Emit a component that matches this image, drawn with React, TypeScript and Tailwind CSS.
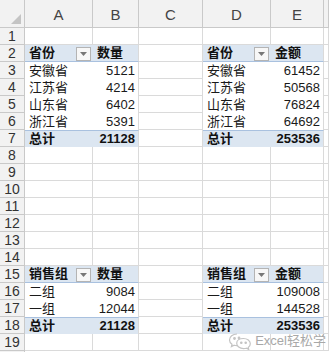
const font = "font-['Liberation_Sans','Noto_Sans_CJK_SC',sans-serif]";

const cols = [
  { k: "A", w: "w-[68px]" },
  { k: "B", w: "w-[46px]" },
  { k: "C", w: "w-[64px]" },
  { k: "D", w: "w-[68px]" },
  { k: "E", w: "w-[53px]" },
  { k: "", w: "flex-1" },
];

type Pivot = {
  col: number;
  row: number;
  head: [string, string];
  body: [string, number][];
  total: number;
};

const pivots: Pivot[] = [
  {
    col: 0,
    row: 2,
    head: ["省份", "数量"],
    body: [
      ["安徽省", 5121],
      ["江苏省", 4214],
      ["山东省", 6402],
      ["浙江省", 5391],
    ],
    total: 21128,
  },
  {
    col: 3,
    row: 2,
    head: ["省份", "金额"],
    body: [
      ["安徽省", 61452],
      ["江苏省", 50568],
      ["山东省", 76824],
      ["浙江省", 64692],
    ],
    total: 253536,
  },
  {
    col: 0,
    row: 15,
    head: ["销售组", "数量"],
    body: [
      ["二组", 9084],
      ["一组", 12044],
    ],
    total: 21128,
  },
  {
    col: 3,
    row: 15,
    head: ["销售组", "金额"],
    body: [
      ["二组", 109008],
      ["一组", 144528],
    ],
    total: 253536,
  },
];

const rows = Array.from({ length: 19 }, (_, i) => i + 1);

function DropButton() {
  return (
    <span className="absolute right-[2px] top-[2px] flex h-[14px] w-[15px] items-center justify-center border border-[#b4b4b4] bg-[#f7f7f7]">
      <svg width="7" height="4" viewBox="0 0 7 4">
        <path d="M0 0h7L3.5 4z" fill="#777" />
      </svg>
    </span>
  );
}

function Cell({ r, c }: { r: number; c: number }) {
  const w = cols[c].w;
  const p = pivots.find(
    (p) => (c === p.col || c === p.col + 1) && r >= p.row && r <= p.row + p.body.length + 1
  );
  if (!p) {
    return <div className={`${w} h-full border-r border-b border-[#dadada]`} />;
  }
  const first = c === p.col;
  const edge = first ? "" : "border-r border-[#dadada]";
  const align = first ? "justify-start pl-[4px]" : "justify-end pr-[3px]";
  if (r === p.row) {
    return (
      <div
        className={`${w} ${edge} relative flex h-full items-center justify-start pl-[4px] border-b border-b-[#a9c1df] bg-[#dce6f1] font-bold text-[#111]`}
      >
        {first ? p.head[0] : p.head[1]}
        {first && <DropButton />}
      </div>
    );
  }
  const last = p.row + p.body.length + 1;
  if (r === last) {
    return (
      <div
        className={`${w} ${edge} flex h-full items-center ${align} border-t border-t-[#a9c1df] bg-[#dce6f1] font-bold text-[#111]`}
      >
        {first ? "总计" : p.total}
      </div>
    );
  }
  const item = p.body[r - p.row - 1];
  return (
    <div className={`${w} ${edge} flex h-full items-center ${align} bg-white text-[#1a1a1a]`}>
      {first ? item[0] : item[1]}
    </div>
  );
}

function Watermark() {
  return (
    <div className="absolute right-[3px] top-[331px] flex items-center gap-[3px] text-[13px] text-[#a8a8a8]">
      <svg width="24" height="18" viewBox="0 0 24 18" fill="none" stroke="#c4c4c4" strokeWidth="1.2">
        <path d="M9 2C4.6 2 1.5 4.8 1.5 8c0 1.8 1 3.3 2.5 4.3L3.4 14.6l2.8-1.4c.9.3 1.8.4 2.8.4" />
        <path d="M15.5 6.5c3.8 0 6.8 2.4 6.8 5.3 0 1.5-.8 2.8-2.1 3.7l.5 1.9-2.3-1.2c-.9.3-1.9.4-2.9.4-3.8 0-6.8-2.4-6.8-5.3s3-4.8 6.8-4.8z" />
        <circle cx="6.5" cy="6.5" r="0.8" fill="#c4c4c4" />
        <circle cx="11" cy="6" r="0.8" fill="#c4c4c4" />
        <circle cx="13.3" cy="10.8" r="0.7" fill="#c4c4c4" />
        <circle cx="17.7" cy="10.8" r="0.7" fill="#c4c4c4" />
      </svg>
      <span>Excel轻松学</span>
    </div>
  );
}

export default function App() {
  return (
    <div className={`relative h-[352px] w-[329px] overflow-hidden bg-white text-[13px] ${font}`}>
      <div className="flex h-[28px] bg-[#f2f2f2] text-[15px] text-[#444]">
        <div className="relative h-full w-[25px] border-r border-b border-[#c9c9c9]">
          <svg className="absolute bottom-[3px] right-[3px]" width="10" height="10" viewBox="0 0 10 10">
            <path d="M10 0v10H0z" fill="#c4c4c4" />
          </svg>
        </div>
        {cols.map((c) => (
          <div
            key={c.k || "F"}
            className={`${c.w} flex h-full items-end justify-center border-r border-b border-[#c9c9c9] pb-[1px]`}
          >
            {c.k}
          </div>
        ))}
      </div>
      {rows.map((r) => (
        <div key={r} className="flex h-[17px]">
          <div className="flex h-full w-[25px] items-center justify-center border-r border-b border-[#c9c9c9] bg-[#f2f2f2] text-[14px] text-[#333]">
            {r}
          </div>
          {cols.map((_, c) => (
            <Cell key={c} r={r} c={c} />
          ))}
        </div>
      ))}
      <div className="flex h-[1px] w-[25px] border-r border-[#c9c9c9] bg-[#f2f2f2]" />
      <Watermark />
    </div>
  );
}
